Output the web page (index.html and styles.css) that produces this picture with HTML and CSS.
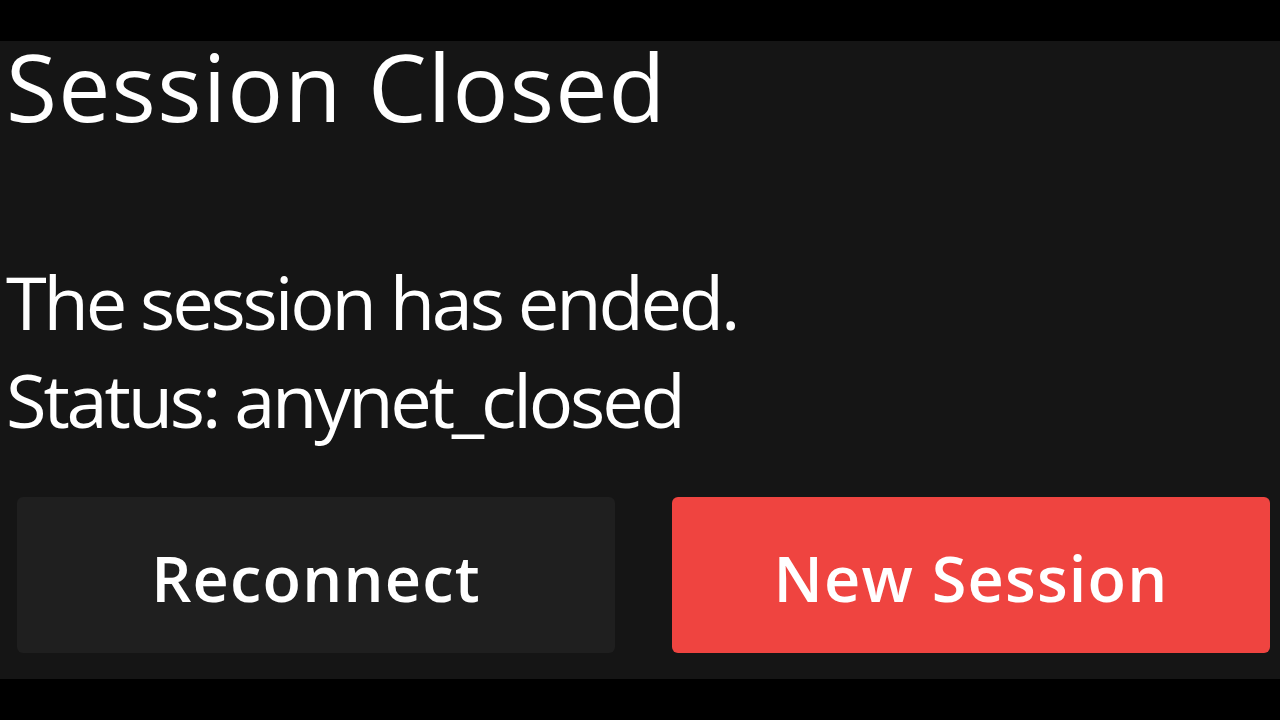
FILE: index.html
```html
<!DOCTYPE html>
<html lang="en">
<head>
<meta charset="utf-8">
<title>Session Closed</title>
<link rel="stylesheet" href="styles.css">
</head>
<body>
<div class="panel">
  <h1 class="title">Session Closed</h1>
  <div class="message">
    <p class="line">The session has ended.</p>
    <p class="line">Status: anynet_closed</p>
  </div>
  <div class="actions">
    <button class="btn btn-secondary">Reconnect</button>
    <button class="btn btn-primary">New Session</button>
  </div>
</div>
</body>
</html>
```

FILE: styles.css
```css
html, body {
  margin: 0;
  padding: 0;
  background: #000;
  width: 1280px;
  height: 720px;
  overflow: hidden;
}
body {
  font-family: "Open Sans", "Noto Sans", sans-serif;
  color: #fff;
  padding-top: 41px;
  box-sizing: border-box;
}
.panel {
  background: #151515;
  height: 638px;
  box-sizing: border-box;
  padding: 0 10px 26px 6px;
  display: flex;
  flex-direction: column;
}
.title {
  margin: 0;
  font-size: 93px;
  font-weight: 400;
  line-height: 90px;
  letter-spacing: 1.2px;
}
.message {
  margin-top: 122px;
}
.line {
  margin: 0;
  font-size: 74px;
  line-height: 98px;
  letter-spacing: -3.2px;
}
.actions {
  margin-top: auto;
  display: grid;
  grid-template-columns: 1fr 1fr;
  gap: 57px;
  padding-left: 11px;
}
.btn {
  height: 156px;
  border: none;
  border-radius: 6px;
  font-family: "Open Sans", "Noto Sans", sans-serif;
  font-size: 63px;
  font-weight: 600;
  letter-spacing: 1.2px;
  color: #fff;
  display: flex;
  align-items: center;
  justify-content: center;
  padding: 5px 0 0;
}
.btn-secondary {
  background: #1f1f1f;
}
.btn-primary {
  background: #ef4440;
}
```
